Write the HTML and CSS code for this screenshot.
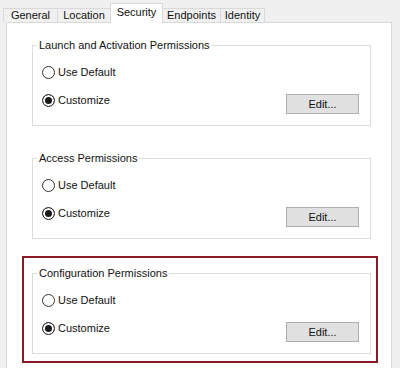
FILE: index.html
```html
<!DOCTYPE html>
<html>
<head>
<meta charset="utf-8">
<link rel="stylesheet" href="styles.css">
</head>
<body>
<div class="tabs">
  <div class="tab tab-general">General</div>
  <div class="tab tab-location">Location</div>
  <div class="tab tab-security tab-active">Security</div>
  <div class="tab tab-endpoints">Endpoints</div>
  <div class="tab tab-identity">Identity</div>
</div>
<div class="panel">
  <fieldset class="group">
    <legend>Launch and Activation Permissions</legend>
    <div class="option"><span class="radio"></span>Use Default</div>
    <div class="option-row">
      <div class="option"><span class="radio radio-on"></span>Customize</div>
      <button class="btn">Edit...</button>
    </div>
  </fieldset>
  <fieldset class="group group-second">
    <legend>Access Permissions</legend>
    <div class="option"><span class="radio"></span>Use Default</div>
    <div class="option-row">
      <div class="option"><span class="radio radio-on"></span>Customize</div>
      <button class="btn">Edit...</button>
    </div>
  </fieldset>
  <div class="highlight">
    <fieldset class="group">
      <legend>Configuration Permissions</legend>
      <div class="option"><span class="radio"></span>Use Default</div>
      <div class="option-row">
        <div class="option"><span class="radio radio-on"></span>Customize</div>
        <button class="btn">Edit...</button>
      </div>
    </fieldset>
  </div>
</div>
</body>
</html>
```
FILE: styles.css
```css
html, body {
  margin: 0;
}
body {
  width: 400px;
  height: 368px;
  overflow: hidden;
  background: #f0f0f0;
  font-family: "Liberation Sans", Arial, sans-serif;
  font-size: 11px;
  color: #111;
  display: flex;
  flex-direction: column;
}
.tabs {
  display: flex;
  align-items: flex-end;
  height: 22px;
  flex: none;
  padding-left: 3px;
  position: relative;
  z-index: 1;
}
.tab {
  box-sizing: border-box;
  height: 14px;
  line-height: 12px;
  padding: 0;
  text-align: center;
  border: 1px solid #d9d9d9;
  border-bottom: none;
  background: #f0f0f0;
  margin-right: -1px;
  white-space: nowrap;
}
.tab-general { width: 55px; }
.tab-location { width: 54px; }
.tab-security { width: 53px; }
.tab-endpoints { width: 59px; }
.tab-identity { width: 45px; }
.tab-active {
  height: 20px;
  line-height: 16px;
  background: #fff;
  margin-bottom: -1px;
}
.panel {
  flex: 1;
  margin: 0 8px 0 6px;
  background: #fff;
  border: 1px solid #d9d9d9;
  border-bottom: none;
  padding: 15px 20px 0 25px;
}
.group {
  margin: 0;
  padding: 12px 11px 11px 9px;
  border: 1px solid #dcdcdc;
  min-width: 0;
}
.group legend {
  padding: 0 2px;
  margin-left: -5px;
  line-height: 14px;
}
.group-second {
  margin-top: 25px;
}
.highlight {
  margin: 17px -7px 0 -10px;
  border: 2px solid #8b1a24;
  padding: 8px 5px 7px 8px;
}
.option {
  display: flex;
  align-items: center;
  gap: 3px;
  height: 16px;
}
.option-row {
  display: flex;
  justify-content: space-between;
  align-items: flex-start;
  margin-top: 12px;
}
.radio {
  box-sizing: border-box;
  width: 13px;
  height: 13px;
  border: 1px solid #333;
  border-radius: 50%;
  background: #fff;
}
.radio-on {
  background: #1a1a1a;
  box-shadow: inset 0 0 0 2px #fff;
}
.btn {
  margin-top: 2px;
  width: 73px;
  height: 20px;
  padding: 0;
  border: 1px solid #adadad;
  background: #e1e1e1;
  font: inherit;
  color: #111;
}
```
